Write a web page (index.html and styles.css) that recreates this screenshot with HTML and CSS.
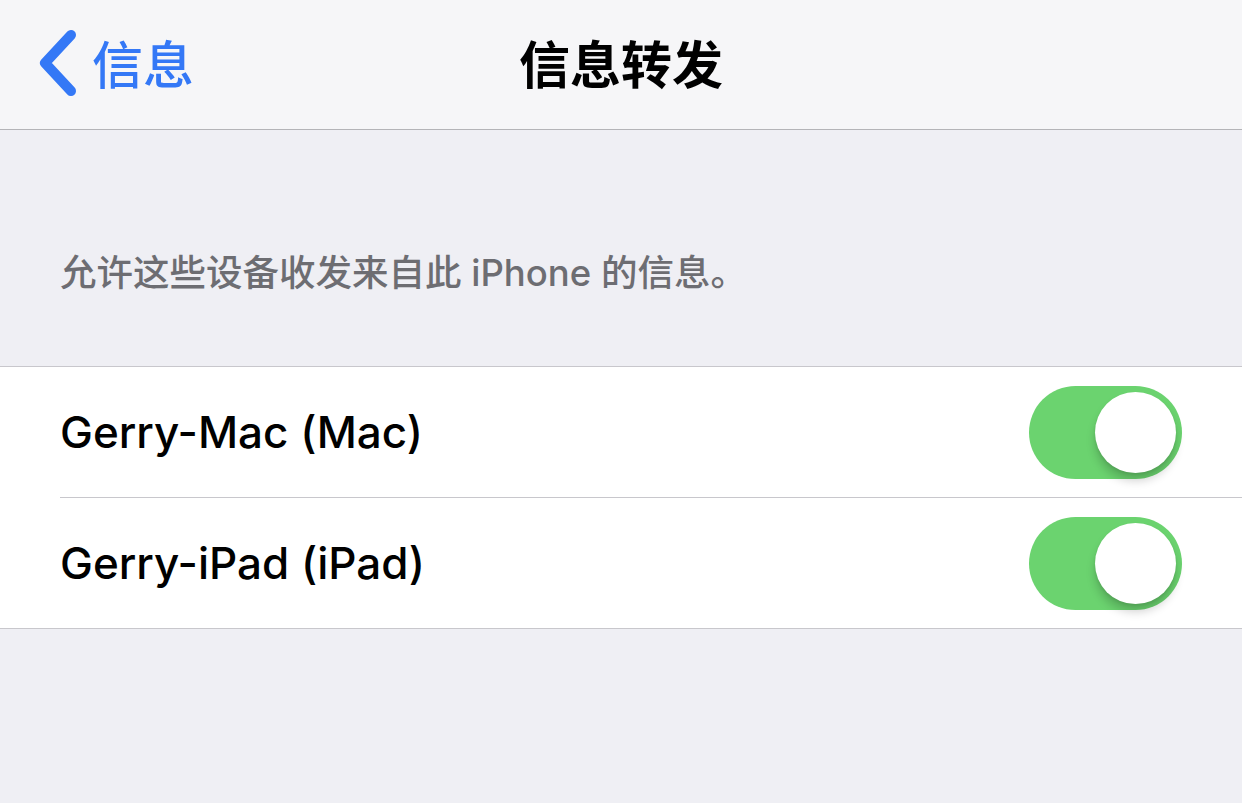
FILE: index.html
```html
<!DOCTYPE html>
<html lang="zh">
<head>
<meta charset="utf-8">
<link rel="stylesheet" href="styles.css">
</head>
<body>
<div class="screen">
  <header class="nav">
    <div class="back">
      <svg class="chev" width="40" height="66" viewBox="0 0 40 66">
        <path d="M33 5 L7 33 L33 61" fill="none" stroke="#3478f6" stroke-width="10" stroke-linecap="round" stroke-linejoin="round"/>
      </svg>
      <span class="back-label">信息</span>
    </div>
    <h1 class="title">信息转发</h1>
  </header>
  <div class="section-footer">允许这些设备收发来自此 iPhone 的信息。</div>
  <div class="group">
    <div class="row">
      <span class="label">Gerry-Mac (Mac)</span>
      <div class="switch"><div class="knob"></div></div>
    </div>
    <div class="row">
      <span class="label">Gerry-iPad (iPad)</span>
      <div class="switch"><div class="knob"></div></div>
    </div>
  </div>
</div>
</body>
</html>
```

FILE: styles.css
```css
html, body {
  margin: 0;
  padding: 0;
}
body {
  background: #efeff4;
  font-family: Inter, "Noto Sans CJK SC", sans-serif;
}
.screen {
  width: 1242px;
  height: 803px;
  background: #efeff4;
  overflow: hidden;
}
.nav {
  position: relative;
  height: 129px;
  background: #f6f6f8;
  border-bottom: 1px solid #b4b4b8;
  display: flex;
  align-items: center;
  justify-content: center;
}
.back {
  position: absolute;
  left: 38px;
  top: 0;
  height: 129px;
  display: flex;
  align-items: center;
  gap: 14px;
  color: #3478f6;
}
.chev {
  display: block;
  margin-top: -4px;
}
.back-label {
  font-family: "Noto Sans CJK SC", sans-serif;
  font-size: 51px;
  font-weight: 500;
  margin-top: -6px;
}
.title {
  margin: -6px 0 0 0;
  font-family: "Noto Sans CJK SC", sans-serif;
  font-size: 51px;
  font-weight: 700;
  color: #000;
}
.section-footer {
  padding: 118px 0 0 60px;
  height: 118px;
  box-sizing: content-box;
  font-family: Inter, "Noto Sans CJK SC", sans-serif;
  font-size: 36.5px;
  font-weight: 500;
  line-height: 50px;
  color: #6d6d72;
}
.group {
  background: #fff;
  border-top: 1px solid #c8c7cc;
  border-bottom: 1px solid #c8c7cc;
}
.row {
  height: 130px;
  margin-left: 60px;
  padding-right: 60px;
  display: flex;
  align-items: center;
  justify-content: space-between;
}
.row + .row {
  border-top: 1px solid #c8c7cc;
}
.label {
  font-size: 44px;
  font-weight: 500;
  color: #000;
}
.switch {
  width: 153px;
  height: 93px;
  border-radius: 47px;
  background: #6bd36f;
  position: relative;
}
.knob {
  position: absolute;
  right: 6px;
  top: 6px;
  width: 81px;
  height: 81px;
  border-radius: 50%;
  background: #fff;
  box-shadow: 0 8px 10px rgba(0,0,0,0.18), 0 2px 3px rgba(0,0,0,0.08);
}
```
